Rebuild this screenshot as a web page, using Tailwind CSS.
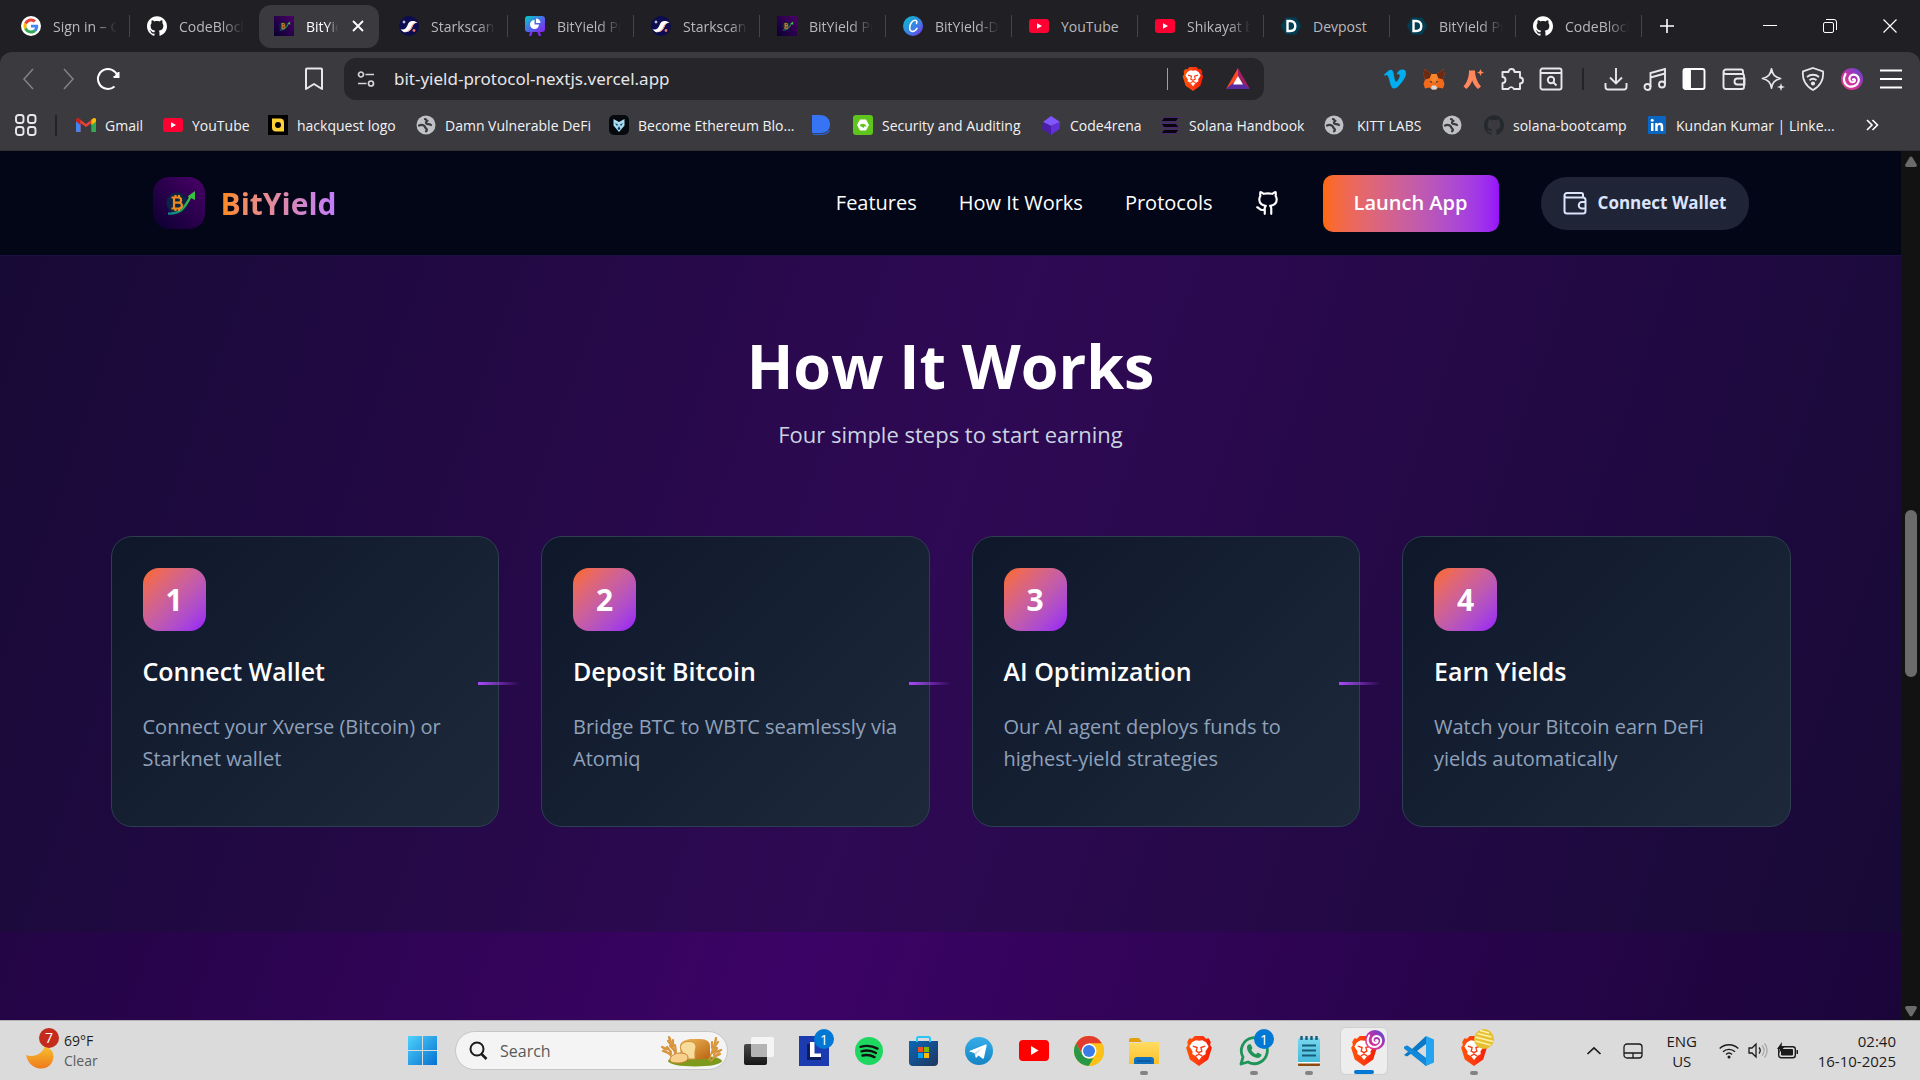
<!DOCTYPE html>
<html lang="en">
<head>
<meta charset="utf-8">
<meta name="viewport" content="width=device-width, initial-scale=1">
<title>BitYield Protocol</title>
<script src="https://cdn.jsdelivr.net/npm/@tailwindcss/browser@4"></script>
</head>
<body class="flex h-screen flex-col overflow-hidden bg-[#3b3a3f] font-['Open_Sans','Noto_Sans',sans-serif] text-white">

<!-- Shared icon symbols -->
<svg class="absolute size-0" aria-hidden="true">
  <defs>
    <linearGradient id="gLogo" x1="0" y1="1" x2="1" y2="0"><stop offset="0" stop-color="#0a0030"/><stop offset="1" stop-color="#4a0068"/></linearGradient>
    <linearGradient id="gArrow" x1="0" y1="1" x2="1" y2="0"><stop offset="0" stop-color="#10808a"/><stop offset="1" stop-color="#3fc838"/></linearGradient>
    <linearGradient id="gCanva" x1="0" y1="0" x2="1" y2="1"><stop offset="0" stop-color="#00c4cc"/><stop offset=".6" stop-color="#3f7be8"/><stop offset="1" stop-color="#7d2ae8"/></linearGradient>
    <linearGradient id="gBoard" x1="0" y1="0" x2="1" y2="1"><stop offset="0" stop-color="#00d0c0"/><stop offset=".5" stop-color="#4a6ce8"/><stop offset="1" stop-color="#8a20f0"/></linearGradient>
    <linearGradient id="gBrave" x1="0" y1="0" x2="1" y2="0"><stop offset="0" stop-color="#ff5500"/><stop offset=".5" stop-color="#ff3b12"/><stop offset="1" stop-color="#f01d00"/></linearGradient>
    <linearGradient id="gWin" x1="0" y1="0" x2="1" y2="1"><stop offset="0" stop-color="#4fd2fb"/><stop offset="1" stop-color="#0470d2"/></linearGradient>
    <linearGradient id="gSwirl" x1="1" y1="0" x2="0" y2="1"><stop offset="0" stop-color="#4a4ed8"/><stop offset=".5" stop-color="#c030a8"/><stop offset="1" stop-color="#f04080"/></linearGradient>
    <linearGradient id="gMoon" x1="0" y1="0" x2="0" y2="1"><stop offset="0" stop-color="#f8c030"/><stop offset="1" stop-color="#ee7a1c"/></linearGradient>
    <linearGradient id="gFolder" x1="0" y1="0" x2="0" y2="1"><stop offset="0" stop-color="#ffdc60"/><stop offset="1" stop-color="#fcc02c"/></linearGradient>
    <linearGradient id="gStore" x1="0" y1="0" x2="1" y2="1"><stop offset="0" stop-color="#0a68b8"/><stop offset="1" stop-color="#20355c"/></linearGradient>
    <linearGradient id="gTele" x1="0" y1="0" x2="0" y2="1"><stop offset="0" stop-color="#35aee8"/><stop offset="1" stop-color="#1583c4"/></linearGradient>
    <linearGradient id="gPad" x1="0" y1="0" x2="0" y2="1"><stop offset="0" stop-color="#76d8ee"/><stop offset="1" stop-color="#44b8d8"/></linearGradient>
    <linearGradient id="gBread" x1="0" y1="0" x2="1" y2="1"><stop offset="0" stop-color="#f2bc5c"/><stop offset="1" stop-color="#b86210"/></linearGradient>
    <linearGradient id="gDark" x1="0" y1="0" x2="0" y2="1"><stop offset="0" stop-color="#4a4a4a"/><stop offset="1" stop-color="#151515"/></linearGradient>

    <symbol id="google" viewBox="0 0 48 48"><circle cx="24" cy="24" r="24" fill="#fff"/><g transform="translate(6 6) scale(.75)"><path fill="#ea4335" d="M24 9.5c3.54 0 6.71 1.22 9.21 3.6l6.85-6.85C35.9 2.38 30.47 0 24 0 14.62 0 6.51 5.38 2.56 13.22l7.98 6.19C12.43 13.72 17.74 9.5 24 9.5z"/><path fill="#4285f4" d="M46.98 24.55c0-1.57-.15-3.09-.38-4.55H24v9.02h12.94c-.58 2.96-2.26 5.48-4.78 7.18l7.73 6c4.51-4.18 7.09-10.36 7.09-17.65z"/><path fill="#fbbc05" d="M10.53 28.59c-.48-1.45-.76-2.99-.76-4.59s.27-3.14.76-4.59l-7.98-6.19C.92 16.46 0 20.12 0 24c0 3.88.92 7.54 2.56 10.78l7.97-6.19z"/><path fill="#34a853" d="M24 48c6.48 0 11.93-2.13 15.89-5.81l-7.73-6c-2.15 1.45-4.92 2.3-8.16 2.3-6.26 0-11.57-4.22-13.47-9.91l-7.98 6.19C6.51 42.62 14.62 48 24 48z"/></g></symbol>
    <symbol id="github" viewBox="0 0 24 24"><path fill="currentColor" d="M12 .297c-6.63 0-12 5.373-12 12 0 5.303 3.438 9.8 8.205 11.385.6.113.82-.258.82-.577 0-.285-.01-1.04-.015-2.04-3.338.724-4.042-1.61-4.042-1.61C4.422 18.07 3.633 17.7 3.633 17.7c-1.087-.744.084-.729.084-.729 1.205.084 1.838 1.236 1.838 1.236 1.07 1.835 2.809 1.305 3.495.998.108-.776.417-1.305.76-1.605-2.665-.3-5.466-1.332-5.466-5.93 0-1.31.465-2.38 1.235-3.22-.135-.303-.54-1.523.105-3.176 0 0 1.005-.322 3.3 1.23.96-.267 1.98-.399 3-.405 1.02.006 2.04.138 3 .405 2.28-1.552 3.285-1.23 3.285-1.23.645 1.653.24 2.873.12 3.176.765.84 1.23 1.91 1.23 3.22 0 4.61-2.805 5.625-5.475 5.92.42.36.81 1.096.81 2.22 0 1.606-.015 2.896-.015 3.286 0 .315.21.69.825.57C20.565 22.092 24 17.592 24 12.297c0-6.627-5.373-12-12-12"/></symbol>
    <symbol id="coin" viewBox="0 0 52 52"><rect width="52" height="52" fill="url(#gLogo)"/><circle cx="24" cy="26" r="10.500" fill="#0b2547"/><path d="M15 36.500c11 1 17-5 23-18" fill="none" stroke="url(#gArrow)" stroke-width="2.400"/><path d="M34.500 19.500L42 14v9z" fill="#38c040"/><g fill="none" stroke="#f08a1c" stroke-width="2.200"><path d="M18.500 20.500h7a2.500 2.500 0 0 1 0 5.200h-4.500 5a2.900 2.900 0 0 1 0 5.800h-7.500M21 20.500v11M22.500 18v2.500M26 18v2.500M22.500 31.500V34M26 31.500V34"/></g></symbol>
    <symbol id="stark" viewBox="0 0 20 20"><circle cx="10" cy="10" r="10" fill="#0c0c4f"/><path d="M1.500 13.500c5 .5 6-2 7.500-5.500C10.500 5 13 4 18.500 6.500c-3 .3-4 1.500-5 4C12 14 9.500 17 4.500 16z" fill="#fff"/><path d="M3.500 15.800c5 .7 7.500-1.800 9-5.300 1.200-2.700 2.500-4 6-4-3 .5-4 2-5 4.500-1.500 3.500-5 6-10 4.800z" fill="#f0907a"/><circle cx="15" cy="14.500" r="1.400" fill="#ec796b"/><path d="M5 4l.6 1.400L7 6l-1.400.6L5 8l-.6-1.400L3 6l1.400-.6z" fill="#fff"/></symbol>
    <symbol id="board" viewBox="0 0 20 20"><path d="M7 14l-2 6M13 14l2 6" stroke="#7c2cf0" stroke-width="2.400"/><rect width="20" height="16" rx="3" fill="url(#gBoard)"/><path d="M9.500 4a4.500 4.500 0 1 0 4.500 4.500H9.500z" fill="#fff"/><path d="M11 2.500V7h4.500A4.500 4.500 0 0 0 11 2.500z" fill="#fff"/></symbol>
    <symbol id="canva" viewBox="0 0 20 20"><circle cx="10" cy="10" r="10" fill="url(#gCanva)"/><path d="M13.500 7.500c.8-1.400.4-3.200-1.400-3.200-3 0-5.400 4-5.400 7.200 0 2.300 1 3.900 2.800 3.900 1.800 0 3.400-1.200 4.500-3" fill="none" stroke="#fff" stroke-width="1.500" stroke-linecap="round"/></symbol>
    <symbol id="yt" viewBox="0 0 20 14"><rect width="20" height="14" rx="3" fill="#ff0033"/><path d="M8 4.200v5.600L13 7z" fill="#fff"/></symbol>
    <symbol id="devpost" viewBox="0 0 20 20"><path d="M5 1.500h10l5 8.500-5 8.500H5L0 10z" fill="#003e54"/><path d="M6.500 5v10h2.800c3 0 5-1.900 5-5s-2-5-5-5z" fill="none" stroke="#fff" stroke-width="2.400"/></symbol>
    <symbol id="globe" viewBox="0 0 20 20"><circle cx="10" cy="10" r="9.500" fill="#bfc1c5"/><path d="M3 10.500c1.500-.8 3.500-.8 5 .2 1.400 1 1 2.300 2.300 3 1 .6.700 2-.3 2.600M9 4.200c1.500 0 1 1.500 2.500 1.700-1.500.8-2.200 2-1 2.800 1.200.8 2.800-.2 4.500 1.300" fill="none" stroke="#3b3a3f" stroke-width="2.200" stroke-linecap="round" stroke-linejoin="round"/></symbol>
    <symbol id="brave" viewBox="0 0 24 28"><path d="M5.500 2.500L8 0h8l2.500 2.500L21 2.200 23 5.500l-.6 2.800L24 11l-3.400 11L12 28 3.400 22 0 11l1.600-2.700L1 5.500l2-3.300z" fill="url(#gBrave)"/><path d="M12 4.500l3-.6 3.500 2 2.500 4-3 4.500.3 2.300-3.500 2.300-2.800 3.500L9.200 19l-3.500-2.300.3-2.300L3 9.900l2.500-4 3.500-2z" fill="#fff"/><path d="M6.200 9.500l4 1.200-.8 3.500 2.600 1.300 2.600-1.300-.8-3.500 4-1.200M12 15.500v2M9 18.500l3-1.500 3 1.500" fill="none" stroke="#fa3c10" stroke-width="1.300"/></symbol>
    <symbol id="swirl" viewBox="0 0 22 22"><circle cx="11" cy="11" r="11" fill="url(#gSwirl)"/><path d="M12 11.500c1-1 2.400 0 1.900 1.300-.8 2-4.200 2-5.200-.6C7.600 9 9.800 6.500 13 6.600c3.500.1 5.500 3.400 4.600 7-1 3.800-5.600 6-10 4.600C3 16.500 1.500 11 4.500 6" fill="none" stroke="#fff" stroke-width="2.200" stroke-linecap="round"/></symbol>
  </defs>
</svg>

<!-- Tab strip -->
<header class="shrink-0">
  <div class="flex h-13 items-center bg-[#202024] pl-1 text-[14px] text-[#b9b9bd]">
    <div role="tablist" class="flex h-[43px] shrink-0 items-center">
      <button role="tab" class="flex h-full w-[126px] shrink-0 items-center gap-3 pl-[17px]"><svg class="size-5 shrink-0"><use href="#google"/></svg><span class="w-[65px] overflow-hidden text-left whitespace-nowrap [mask-image:linear-gradient(90deg,#000_65%,transparent)]">Sign in – Google</span><span class="ml-auto h-[22px] w-px shrink-0 bg-[#44444a]"></span></button>
      <button role="tab" class="flex h-full w-[126px] shrink-0 items-center gap-3 pl-[17px]"><svg class="size-5 shrink-0 text-white"><use href="#github"/></svg><span class="w-[65px] overflow-hidden text-left whitespace-nowrap [mask-image:linear-gradient(90deg,#000_65%,transparent)]">CodeBlocker</span></button>
      <div class="flex h-[43px] w-[126px] shrink-0 items-center pr-[3px] pl-[3px]">
        <div class="flex h-[43px] w-full items-center rounded-xl bg-[#3b3a3f] pl-[15px] text-white">
          <button role="tab" aria-selected="true" class="flex items-center gap-3"><svg class="size-5 shrink-0"><use href="#coin"/></svg><span class="w-8 overflow-hidden text-left whitespace-nowrap [mask-image:linear-gradient(90deg,#000_65%,transparent)]">BitYield</span></button>
          <button aria-label="Close tab" class="ml-3"><svg class="size-4" viewBox="0 0 16 16" fill="none" stroke="#fff" stroke-width="1.800"><path d="M3 3l10 10M13 3L3 13"/></svg></button>
        </div>
      </div>
      <button role="tab" class="flex h-full w-[126px] shrink-0 items-center gap-3 pl-[17px]"><svg class="size-5 shrink-0"><use href="#stark"/></svg><span class="w-[65px] overflow-hidden text-left whitespace-nowrap [mask-image:linear-gradient(90deg,#000_75%,transparent)]">Starkscan</span><span class="ml-auto h-[22px] w-px shrink-0 bg-[#44444a]"></span></button>
      <button role="tab" class="flex h-full w-[126px] shrink-0 items-center gap-3 pl-[17px]"><svg class="size-5 shrink-0"><use href="#board"/></svg><span class="w-[65px] overflow-hidden text-left whitespace-nowrap [mask-image:linear-gradient(90deg,#000_65%,transparent)]">BitYield Pitch</span><span class="ml-auto h-[22px] w-px shrink-0 bg-[#44444a]"></span></button>
      <button role="tab" class="flex h-full w-[126px] shrink-0 items-center gap-3 pl-[17px]"><svg class="size-5 shrink-0"><use href="#stark"/></svg><span class="w-[65px] overflow-hidden text-left whitespace-nowrap [mask-image:linear-gradient(90deg,#000_75%,transparent)]">Starkscan</span><span class="ml-auto h-[22px] w-px shrink-0 bg-[#44444a]"></span></button>
      <button role="tab" class="flex h-full w-[126px] shrink-0 items-center gap-3 pl-[17px]"><svg class="size-5 shrink-0"><use href="#coin"/></svg><span class="w-[65px] overflow-hidden text-left whitespace-nowrap [mask-image:linear-gradient(90deg,#000_65%,transparent)]">BitYield Protocol</span><span class="ml-auto h-[22px] w-px shrink-0 bg-[#44444a]"></span></button>
      <button role="tab" class="flex h-full w-[126px] shrink-0 items-center gap-3 pl-[17px]"><svg class="size-5 shrink-0"><use href="#canva"/></svg><span class="w-[65px] overflow-hidden text-left whitespace-nowrap [mask-image:linear-gradient(90deg,#000_65%,transparent)]">BitYield-Deck</span><span class="ml-auto h-[22px] w-px shrink-0 bg-[#44444a]"></span></button>
      <button role="tab" class="flex h-full w-[126px] shrink-0 items-center gap-3 pl-[17px]"><svg class="size-5 shrink-0"><use href="#yt"/></svg><span class="w-[65px] overflow-hidden text-left whitespace-nowrap">YouTube</span><span class="ml-auto h-[22px] w-px shrink-0 bg-[#44444a]"></span></button>
      <button role="tab" class="flex h-full w-[126px] shrink-0 items-center gap-3 pl-[17px]"><svg class="size-5 shrink-0"><use href="#yt"/></svg><span class="w-[65px] overflow-hidden text-left whitespace-nowrap [mask-image:linear-gradient(90deg,#000_65%,transparent)]">Shikayat bhi</span><span class="ml-auto h-[22px] w-px shrink-0 bg-[#44444a]"></span></button>
      <button role="tab" class="flex h-full w-[126px] shrink-0 items-center gap-3 pl-[17px]"><svg class="size-5 shrink-0"><use href="#devpost"/></svg><span class="w-[65px] overflow-hidden text-left whitespace-nowrap">Devpost</span><span class="ml-auto h-[22px] w-px shrink-0 bg-[#44444a]"></span></button>
      <button role="tab" class="flex h-full w-[126px] shrink-0 items-center gap-3 pl-[17px]"><svg class="size-5 shrink-0"><use href="#devpost"/></svg><span class="w-[65px] overflow-hidden text-left whitespace-nowrap [mask-image:linear-gradient(90deg,#000_65%,transparent)]">BitYield Protocol</span><span class="ml-auto h-[22px] w-px shrink-0 bg-[#44444a]"></span></button>
      <button role="tab" class="flex h-full w-[126px] shrink-0 items-center gap-3 pl-[17px]"><svg class="size-5 shrink-0 text-white"><use href="#github"/></svg><span class="w-[65px] overflow-hidden text-left whitespace-nowrap [mask-image:linear-gradient(90deg,#000_65%,transparent)]">CodeBlocker</span><span class="ml-auto h-[22px] w-px shrink-0 bg-[#44444a]"></span></button>
    </div>
    <button aria-label="New tab" class="ml-[17px]"><svg class="size-4" viewBox="0 0 16 16" stroke="#fff" stroke-width="1.600"><path d="M8 1v14M1 8h14"/></svg></button>
    <div class="ml-auto flex">
      <button aria-label="Minimize" class="grid w-15 place-items-center"><svg class="size-4" viewBox="0 0 16 16" stroke="#fff" fill="none"><path d="M1 7.500h14"/></svg></button>
      <button aria-label="Restore" class="grid w-15 place-items-center"><svg class="size-4" viewBox="0 0 16 16" stroke="#fff" fill="none"><rect x="1.500" y="4.500" width="10" height="10" rx="1.500"/><path d="M4 1.500h8a2.500 2.500 0 0 1 2.500 2.500v8"/></svg></button>
      <button aria-label="Close" class="grid w-15 place-items-center"><svg class="size-4" viewBox="0 0 16 16" stroke="#fff" stroke-width="1.200" fill="none"><path d="M1.500 1.500l13 13M14.500 1.500l-13 13"/></svg></button>
    </div>
  </div>

  <!-- Toolbar -->
  <div class="bg-[#202024]">
  <div class="flex h-[54px] items-center rounded-t-xl bg-[#3b3a3f] pr-[9px] pl-[9px]">
    <button aria-label="Back" class="grid w-[39px] place-items-center"><svg class="size-6" viewBox="0 0 24 24" fill="none" stroke="#838287" stroke-width="1.500"><path d="M16 2L7 12l9 10"/></svg></button>
    <button aria-label="Forward" class="grid w-[39px] place-items-center"><svg class="size-6" viewBox="0 0 24 24" fill="none" stroke="#838287" stroke-width="1.500"><path d="M8 2l9 10-9 10"/></svg></button>
    <button aria-label="Reload" class="grid w-[41px] place-items-center"><svg class="size-6" viewBox="0 0 24 24" fill="none" stroke="#fff" stroke-width="2"><path d="M18.500 19.500A10 10 0 1 1 21.500 9"/><path d="M22.500 5v5h-5" fill="#fff"/></svg></button>
    <button aria-label="Bookmark this page" class="ml-[166px] grid w-10 place-items-center"><svg class="size-6" viewBox="0 0 24 24" fill="none" stroke="#e8e8ea" stroke-width="2" stroke-linejoin="round"><path d="M5 1.500h14a1 1 0 0 1 1 1V22l-8-5-8 5V2.500a1 1 0 0 1 1-1z"/></svg></button>
    <div class="ml-[10px] flex h-[42px] w-[920px] shrink-0 items-center rounded-xl bg-[#25252a] pr-[14px] pl-[13px]">
      <svg class="size-[18px] shrink-0" viewBox="0 0 18 18" fill="none" stroke="#d5d5d8" stroke-width="1.700"><circle cx="4" cy="4.500" r="2.500"/><path d="M8.500 4.500H17M1 13.500h8.500"/><circle cx="14" cy="13.500" r="2.500"/></svg>
      <input aria-label="Address" value="bit-yield-protocol-nextjs.vercel.app" class="ml-[19px] min-w-0 flex-1 bg-transparent font-['Noto_Sans',sans-serif] text-[17px] text-[#e6e6e9] outline-none">
      <span class="h-[22px] w-px bg-[#a0a0a4]"></span>
      <svg class="ml-[14px] h-6 w-[22px]"><use href="#brave"/></svg>
      <svg class="ml-[22px] h-[22px] w-6" viewBox="0 0 24 22"><path d="M12 0v9l-4 6-8 6z" fill="#ff4724"/><path d="M12 0l12 21-8-5-4-7z" fill="#9e1f63"/><path d="M0 21l7-6h10l7 6z" fill="#5a2ba0"/><path d="M12 8l5 8.500H7z" fill="#fff"/></svg>
    </div>
    <div class="ml-auto flex">
      <button aria-label="Vimeo" class="grid w-[39px] place-items-center"><svg class="size-[22px]" viewBox="0 0 24 24"><path fill="#00adef" d="M23.976 6.417c-.105 2.338-1.739 5.543-4.894 9.609-3.268 4.247-6.026 6.370-8.290 6.370-1.409 0-2.578-1.294-3.553-3.881l-1.918-7.114c-.719-2.584-1.488-3.878-2.312-3.878-.179 0-.806.378-1.881 1.132L0 7.197a315 315 0 0 0 3.501-3.128C5.080 2.701 6.266 1.984 7.055 1.910c1.867-.18 3.016 1.100 3.447 3.838.465 2.953.789 4.789.971 5.507.539 2.450 1.131 3.674 1.776 3.674.502 0 1.256-.796 2.265-2.385 1.004-1.589 1.540-2.797 1.612-3.628.144-1.371-.395-2.061-1.614-2.061-.574 0-1.167.121-1.777.391 1.186-3.868 3.434-5.757 6.762-5.637 2.473.060 3.628 1.664 3.493 4.797z"/></svg></button>
      <button aria-label="MetaMask" class="grid w-[39px] place-items-center"><svg class="size-[22px]" viewBox="0 0 22 22"><path d="M1.500 1l7 5h5l7-5 1 5-1.500 5.500L21.500 16 20 20.500 15.500 19.500 13 21.500H9L6.500 19.500 2 20.500.5 16 2 11.500.5 6z" fill="#f26a1b"/><path d="M1.500 1l7 5-1.500 4-5 1.500L.5 6zM20.500 1l-7 5 1.500 4 5 1.500L21.500 6z" fill="#6b2a12"/><path d="M8.500 6h5l1.500 4-1.500 4h-5L7 10z" fill="#f8862c"/><path d="M9 17.500h4l1 2.500-1 1.500H9L8 20z" fill="#d6d9dc"/><path d="M6.500 13l2.700.5-.7 1.500zM15.500 13l-2.700.5.7 1.500z" fill="#233447"/></svg></button>
      <button aria-label="Ready Wallet" class="grid w-[39px] place-items-center"><svg class="size-[22px]" viewBox="0 0 22 22" fill="#ff875b"><path d="M7 2.500h6c0 6 2 11.500 6 16L16 21c-2.500-2-4.700-5-5.800-8.500-1.100 3.500-3.200 6.500-5.800 8.500L1.500 18.500C5.500 14 7 8.500 7 2.500zM18.500 1l1 2.500 2.500 1-2.500 1-1 2.500-1-2.500-2.500-1 2.500-1z"/></svg></button>
      <button aria-label="Extensions" class="grid w-[39px] place-items-center"><svg class="size-6" viewBox="0 0 24 24" fill="none" stroke="#e8e8ea" stroke-width="1.900" stroke-linejoin="round"><path d="M2.500 5h6a3 3 0 1 1 6 0h5.500v5.500a3 3 0 1 1 0 6V22h-6.200a2.800 2.800 0 0 0-5.300 0h-6v-6a3 3 0 1 0 0-6z"/></svg></button>
      <button aria-label="Search tabs" class="grid w-[39px] place-items-center"><svg class="size-6" viewBox="0 0 24 24" fill="none" stroke="#e8e8ea" stroke-width="1.900"><rect x="1.500" y="1.500" width="21" height="21" rx="2"/><path d="M1.500 6h21M14.500 15.500l3 3"/><circle cx="12" cy="13" r="3.200"/></svg></button>
      <span class="mx-3 h-[22px] w-[2px] self-center bg-[#242428]"></span>
    </div>
    <div class="flex w-[315px]">
      <button aria-label="Downloads" class="grid flex-1 place-items-center"><svg class="size-6" viewBox="0 0 24 24" fill="none" stroke="#e8e8ea" stroke-width="1.900"><path d="M12 1v15M6 10.500l6 6 6-6M1.500 16v4a2.500 2.500 0 0 0 2.500 2.500h16a2.500 2.500 0 0 0 2.500-2.500v-4"/></svg></button>
      <button aria-label="Playlist" class="grid flex-1 place-items-center"><svg class="size-6" viewBox="0 0 24 24" fill="none" stroke="#e8e8ea" stroke-width="1.900"><circle cx="4.500" cy="20" r="3"/><circle cx="19" cy="17.500" r="3"/><path d="M7.500 20V6L22 2v15.500M7.500 10.500L22 6.500"/></svg></button>
      <button aria-label="Sidebar" class="grid flex-1 place-items-center"><svg class="size-6" viewBox="0 0 24 24" fill="none" stroke="#fff" stroke-width="1.900"><rect x="1.500" y="2" width="21" height="20" rx="2"/><path d="M3 3h5v18H3z" fill="#fff"/></svg></button>
      <button aria-label="Wallet" class="grid flex-1 place-items-center"><svg class="size-6" viewBox="0 0 24 24" fill="none" stroke="#e8e8ea" stroke-width="1.900"><path d="M21 7V4.500a2 2 0 0 0-2-2H4a2.500 2.500 0 0 0-2.500 2.500v14.500A2.500 2.500 0 0 0 4 22h16a2 2 0 0 0 2-2V9a2 2 0 0 0-2-2H4A2.500 2.500 0 0 1 1.500 4.500M22.500 11.500h-7a3 3 0 0 0 0 6h7z"/></svg></button>
      <button aria-label="Leo AI" class="grid flex-1 place-items-center"><svg class="size-6" viewBox="0 0 24 24" fill="none" stroke="#e8e8ea" stroke-width="1.800" stroke-linejoin="round"><path d="M10.500 2c1 5.500 3 8 9 9.500-6 1.500-8 4-9 9.500-1-5.500-3-8-9-9.500 6-1.500 8-4 9-9.500z"/><path d="M20 16l1 3 3 1-3 1-1 3-1-3-3-1 3-1z" fill="#e8e8ea" stroke="none"/></svg></button>
      <button aria-label="VPN" class="grid flex-1 place-items-center"><svg class="size-6" viewBox="0 0 24 24" fill="none" stroke="#e8e8ea" stroke-width="1.800"><path d="M12 1l10 3.500c1 8-3 15-10 18.500C5 19.500 1 12.500 2 4.500z"/><path d="M6 10c3.500-3 8.500-3 12 0M8.500 13.200c2-1.600 5-1.600 7 0"/><circle cx="12" cy="16.500" r="1.200" fill="#e8e8ea"/></svg></button>
      <button aria-label="Profile" class="grid flex-1 place-items-center"><svg class="size-[22px]"><use href="#swirl"/></svg></button>
      <button aria-label="Menu" class="grid flex-1 place-items-center"><svg class="size-[22px]" viewBox="0 0 22 22" stroke="#fff" stroke-width="1.800"><path d="M0 2.500h22M0 11h22M0 19.500h22"/></svg></button>
    </div>
  </div>
  </div>

  <!-- Bookmarks bar -->
  <nav aria-label="Bookmarks" class="flex h-[45px] items-center border-b border-[#303034] pr-[41px] pb-[6px] pl-[15px] text-[14px] whitespace-nowrap text-[#f2f2f4]">
    <button aria-label="Apps"><svg class="size-[22px]" viewBox="0 0 22 22" fill="none" stroke="#e8e8ea" stroke-width="1.900"><rect x="1" y="1" width="7.500" height="8" rx="2.500"/><rect x="13" y="1" width="7.500" height="8" rx="2.500"/><rect x="1" y="13" width="7.500" height="8" rx="2.500"/><rect x="13" y="13" width="7.500" height="8" rx="2.500"/></svg></button>
    <span class="mr-[19px] ml-[18px] h-[21px] w-[2px] bg-[#242428]"></span>
    <a href="#" class="flex w-[87px] shrink-0 items-center gap-[9px]"><svg class="size-5" viewBox="0 0 20 20"><path d="M0 5v12h4.500V8L10 12l5.500-4v9H20V5l-2-2-8 6-8-6z" fill="#ea4335"/><path d="M0 5v10.500A1.500 1.500 0 0 0 1.500 17h3V8z" fill="#4285f4"/><path d="M20 5v10.500a1.500 1.500 0 0 1-1.500 1.500h-3V8z" fill="#34a853"/><path d="M15.500 4.500L18 3c1.500-.5 2 .8 2 2v1.500L15.500 10z" fill="#fbbc04"/><path d="M4.500 4.500L2 3C.5 2.500 0 3.800 0 5v1.500L4.500 10z" fill="#c5221f"/></svg>Gmail</a>
    <a href="#" class="flex w-[105px] shrink-0 items-center gap-[9px]"><svg class="size-5"><use href="#yt"/></svg>YouTube</a>
    <a href="#" class="flex w-[148px] shrink-0 items-center gap-[9px]"><svg class="size-5" viewBox="0 0 20 20"><path d="M0 0h20v20H0z" fill="#000"/><path d="M4 3.500h8a4 4 0 0 1 4 4V16.500H8a4 4 0 0 1-4-4z" fill="#ffd036"/><circle cx="10" cy="10" r="3" fill="#000"/></svg>hackquest logo</a>
    <a href="#" class="flex w-[193px] shrink-0 items-center gap-[9px]"><svg class="size-5"><use href="#globe"/></svg>Damn Vulnerable DeFi</a>
    <a href="#" class="flex w-[202px] shrink-0 items-center gap-[9px]"><svg class="size-5" viewBox="0 0 20 20"><rect width="20" height="20" rx="5" fill="#060a0e"/><path d="M4.500 4l5.500 3 5.500-3v6.500L10 17l-5.500-6.500z" fill="#a8dcf0"/><path d="M6 8l3 1.500L8 11zM14 8l-3 1.500 1 1.500zM10 11l1.500 3L10 15l-1.500-1z" fill="#0c3a5c"/></svg>Become Ethereum Blo...</a>
    <a href="#" aria-label="DefiLlama" class="flex w-[42px] shrink-0"><svg class="size-5" viewBox="0 0 20 20"><path d="M1 0h8c6 0 10 4 10 9.500S15 18 10 18H1z" fill="#3673f5"/><path d="M2 19.300h9c3 0 6-1 7.500-4" fill="none" stroke="#2a62dc" stroke-width="1.300"/></svg></a>
    <a href="#" class="flex w-[188px] shrink-0 items-center gap-[9px]"><svg class="size-5" viewBox="0 0 20 20"><rect width="20" height="20" rx="3" fill="#5fc51c"/><path d="M7 4.500h6l3 5.500-3 5.500H7L4 10z" fill="#fff"/><path d="M7 11c0-3 6-3 6.500 1l-2-1-.5 2z" fill="#5fc51c"/></svg>Security and Auditing</a>
    <a href="#" class="flex w-[119px] shrink-0 items-center gap-[9px]"><svg class="size-5" viewBox="0 0 20 20"><path d="M10 1l9 6-9 4-8-4z" fill="#8256ff"/><path d="M2 7l8 4v9l-9-6z" fill="#4a1ea8"/><path d="M19 7l-9 4v9l8.500-6z" fill="#6230d8"/></svg>Code4rena</a>
    <a href="#" class="flex w-[164px] shrink-0 items-center gap-[9px]"><svg class="size-5" viewBox="0 0 20 20" fill="#08040f" stroke="#5a2a90" stroke-width=".7"><path d="M4 2.500h15l-3 4H1zM1 8.500h15l3 4H4zM4 14.500h15l-3 4H1z"/></svg>Solana Handbook</a>
    <a href="#" class="flex w-[118px] shrink-0 items-center gap-[13px]"><svg class="size-5"><use href="#globe"/></svg>KITT LABS</a>
    <a href="#" aria-label="Saved site" class="flex w-[42px] shrink-0"><svg class="size-5"><use href="#globe"/></svg></a>
    <a href="#" class="flex w-[163px] shrink-0 items-center gap-[9px]"><svg class="size-5 text-[#24292e]"><use href="#github"/></svg>solana-bootcamp</a>
    <a href="#" class="flex shrink-0 items-center gap-[9px]"><svg class="size-5" viewBox="0 0 20 20"><rect x="1" y="1" width="18" height="18" rx="1" fill="#0a66c2"/><path d="M4 8h2.500v8H4zM8.200 8h2.300v1.200c.6-1 1.500-1.500 2.700-1.500 2.200 0 3 1.500 3 3.800V16h-2.500v-4c0-1.300-.4-2-1.400-2-1.100 0-1.600.8-1.600 2v4H8.200z" fill="#fff"/><circle cx="5.200" cy="5.200" r="1.500" fill="#fff"/></svg>Kundan Kumar | Linke...</a>
    <button aria-label="More bookmarks" class="ml-auto"><svg class="size-[14px]" viewBox="0 0 14 14" fill="none" stroke="#fff" stroke-width="1.600"><path d="M2 2l5 5-5 5M7.500 2l5 5-5 5"/></svg></button>
  </nav>
</header>

<!-- Web page -->
<div class="flex min-h-0 flex-1">
  <div class="flex min-w-0 flex-1 flex-col overflow-hidden bg-[linear-gradient(109deg,#1a0539,#3c0366_49%,#1a0539)]">
    <div class="border-b border-[#1e1045] bg-[#030617]">
      <div class="mx-auto flex h-[104px] w-full max-w-[1596px] items-center justify-between">
        <a href="#" class="flex items-center gap-4">
          <svg class="size-[52px] rounded-2xl"><use href="#coin"/></svg>
          <span class="bg-linear-to-r from-[#ff8904] to-[#c27aff] bg-clip-text text-[30px] font-bold text-transparent">BitYield</span>
        </a>
        <nav class="flex items-center gap-[42px] text-[20px] font-medium">
          <a href="#">Features</a>
          <a href="#">How It Works</a>
          <a href="#">Protocols</a>
          <a href="#" aria-label="GitHub"><svg class="size-[26px]" viewBox="0 0 24 24" fill="none" stroke="currentColor" stroke-width="2" stroke-linecap="round" stroke-linejoin="round"><path d="M15 22v-4a4.800 4.800 0 0 0-1-3.500c3 0 6-2 6-5.500.08-1.250-.27-2.480-1-3.500.28-1.150.28-2.350 0-3.500 0 0-1 0-3 1.500-2.640-.5-5.360-.5-8 0C6 2 5 2 5 2c-.3 1.150-.3 2.350 0 3.500A5.403 5.403 0 0 0 4 9c0 3.500 3 5.500 6 5.500-.39.490-.68 1.050-.85 1.650-.17.600-.22 1.230-.15 1.850v4M9 18c-4.510 2-5-2-7-2"/></svg></a>
          <button class="h-[57px] w-44 rounded-[10px] bg-linear-to-r from-[#ff6900] to-[#9810fa] font-semibold">Launch App</button>
          <button class="flex h-[53px] w-52 items-center justify-center gap-[11px] rounded-[26px] bg-[#1f2437] text-[17px] font-bold text-[#dbe4fb]"><svg class="size-6" viewBox="0 0 24 24" fill="none" stroke="currentColor" stroke-width="2"><path d="M20 6V3.500A1.500 1.500 0 0 0 18.500 2H4a2.500 2.500 0 0 0-2.500 2.500V20A2.500 2.500 0 0 0 4 22.500h16a2.500 2.500 0 0 0 2.500-2.500V9A2.500 2.500 0 0 0 20 6.500H4a2.200 2.200 0 0 1-2.500-2M23 11h-4a3 3 0 0 0 0 6.500h4"/></svg>Connect Wallet</button>
        </nav>
      </div>
    </div>

    <section class="bg-[#0f172b]/30 pt-[74px] pb-[105px]">
      <h2 class="text-center text-[61px] leading-[72px] font-bold">How It Works</h2>
      <p class="mt-4 text-center text-[22px] leading-8 text-[#cad5e2]">Four simple steps to start earning</p>
      <div class="mx-auto mt-[86px] grid max-w-[1680px] grid-cols-4 gap-[42px]">
        <article class="relative rounded-[21px] border border-[#2c3e4f] bg-[linear-gradient(135deg,#0f172b,#1d293b)] px-[31px] pt-[31px] pb-[51px]">
          <div class="grid size-[63px] place-items-center rounded-2xl bg-linear-to-br from-[#ff6900] to-[#9810fa] text-[30px] font-bold">1</div>
          <h3 class="mt-6 text-[25px] leading-8 font-semibold">Connect Wallet</h3>
          <p class="mt-6 text-[20px] leading-8 text-[#90a1b9]">Connect your Xverse (Bitcoin) or Starknet wallet</p>
          <span class="absolute top-1/2 -right-[22px] h-[3px] w-[42px] bg-linear-to-r from-[#ad46ff] to-transparent"></span>
        </article>
        <article class="relative rounded-[21px] border border-[#2c3e4f] bg-[linear-gradient(135deg,#0f172b,#1d293b)] px-[31px] pt-[31px] pb-[51px]">
          <div class="grid size-[63px] place-items-center rounded-2xl bg-linear-to-br from-[#ff6900] to-[#9810fa] text-[30px] font-bold">2</div>
          <h3 class="mt-6 text-[25px] leading-8 font-semibold">Deposit Bitcoin</h3>
          <p class="mt-6 text-[20px] leading-8 text-[#90a1b9]">Bridge BTC to WBTC seamlessly via Atomiq</p>
          <span class="absolute top-1/2 -right-[22px] h-[3px] w-[42px] bg-linear-to-r from-[#ad46ff] to-transparent"></span>
        </article>
        <article class="relative rounded-[21px] border border-[#2c3e4f] bg-[linear-gradient(135deg,#0f172b,#1d293b)] px-[31px] pt-[31px] pb-[51px]">
          <div class="grid size-[63px] place-items-center rounded-2xl bg-linear-to-br from-[#ff6900] to-[#9810fa] text-[30px] font-bold">3</div>
          <h3 class="mt-6 text-[25px] leading-8 font-semibold">AI Optimization</h3>
          <p class="mt-6 text-[20px] leading-8 text-[#90a1b9]">Our AI agent deploys funds to highest-yield strategies</p>
          <span class="absolute top-1/2 -right-[22px] h-[3px] w-[42px] bg-linear-to-r from-[#ad46ff] to-transparent"></span>
        </article>
        <article class="relative rounded-[21px] border border-[#2c3e4f] bg-[linear-gradient(135deg,#0f172b,#1d293b)] px-[31px] pt-[31px] pb-[51px]">
          <div class="grid size-[63px] place-items-center rounded-2xl bg-linear-to-br from-[#ff6900] to-[#9810fa] text-[30px] font-bold">4</div>
          <h3 class="mt-6 text-[25px] leading-8 font-semibold">Earn Yields</h3>
          <p class="mt-6 text-[20px] leading-8 text-[#90a1b9]">Watch your Bitcoin earn DeFi yields automatically</p>
        </article>
      </div>
    </section>
  </div>
  <!-- Scrollbar -->
  <div class="flex w-[19px] shrink-0 flex-col items-center bg-[#121212] pt-[5px] pb-[3px]">
    <svg class="h-[11px] w-3" viewBox="0 0 12 11" fill="#6b6b6b"><path d="M4.500 1.500q1.500-2 3 0L12 9q0 2-2 2H2Q0 11 0 9z"/></svg>
    <div class="mt-[343px] h-[167px] w-3 rounded-full bg-[#6b6b6b]"></div>
    <svg class="mt-auto h-[11px] w-3" viewBox="0 0 12 11" fill="#6b6b6b"><path d="M4.500 9.500q1.500 2 3 0L12 2q0-2-2-2H2Q0 0 0 2z"/></svg>
  </div>
</div>

<!-- Taskbar -->
<footer class="flex h-15 shrink-0 items-center border-t border-[#b4b2b6] bg-[#dbdbdb] pr-6 text-[#1b1b1b]">
  <button class="flex w-[395px] shrink-0 items-center gap-[5px] pl-[25px] text-left text-[14px] leading-5">
    <span class="relative"><svg class="h-10 w-[34px]" viewBox="0 0 34 40"><path d="M1 24c9 3 17-2 19-9 8 3 11 10 6 18-6 8-22 6-25-9z" fill="url(#gMoon)"/></svg><span class="absolute -top-[3px] left-[14px] grid size-5 place-items-center rounded-full bg-[#c42b1c] text-[14px] text-white">7</span></span>
    <span><span class="block">69°F</span><span class="block text-[#5c5c5c]">Clear</span></span>
  </button>
  <button aria-label="Start" class="grid w-[55px] place-items-center"><svg class="size-[29px]" viewBox="0 0 29 29" fill="url(#gWin)"><path d="M0 0h14v14H0zM15 0h14v14H15zM0 15h14v14H0zM15 15h14v14H15z"/></svg></button>
  <label class="mr-[3px] ml-[5px] flex h-[39px] w-[273px] shrink-0 items-center rounded-full border border-[#c6c6c6] bg-[#f4f4f4] pr-1 pl-[13px]">
    <svg class="size-[19px] shrink-0" viewBox="0 0 19 19" fill="none" stroke="#1b1b1b" stroke-width="2"><circle cx="8" cy="8" r="6.500"/><path d="M12.500 13l5 5" stroke-width="2.500"/></svg>
    <input type="search" aria-label="Search" placeholder="Search" class="ml-3 w-40 min-w-0 flex-1 bg-transparent text-[16px] outline-none placeholder:text-[#5a5a5a]">
    <svg class="h-8 w-[62px] shrink-0" viewBox="0 0 62 32"><ellipse cx="34" cy="26" rx="27" ry="5.500" fill="#7e9a1c"/><g fill="none" stroke="#d8953c" stroke-linecap="round"><path d="M16 25L9 3M15 26L2 13M48 25L55 4M50 26l9-10" stroke-width="1.500"/><path d="M8 2l1 4M7 6l4 5M12 5l0 6M9 11l5 5M14 10l1 7M1 12l5 2M2 16l8 3M6 12l4 5M55 3l-1 5M57 7l-4 6M51 7l0 6M55 13l-4 5M60 15l-5 2M59 19l-6 3M56 13l-3 7" stroke-width="2.200"/></g><path d="M19 11c0-5 7-7 12-7h8c7 0 10 3 10 7v9c0 3-2 4-5 4l-24 1z" fill="url(#gBread)"/><path d="M20 10c3-5 14-5 15 1 0 3-1 4-1 6v7H21v-8c-2-2-2-4-1-6z" fill="#f8dc9c" stroke="#d08c38"/><path d="M9 25c0-5 6-7 10-7 6 0 8 2 8 5s-5 5-10 5-8-1-8-3z" fill="#f6d08c" stroke="#c8802c"/></svg>
  </label>
  <div class="flex h-full items-center">
    <button aria-label="Task view" class="grid h-full w-[55px] shrink-0 place-items-center"><svg class="size-[30px]" viewBox="0 0 30 30"><rect y="8" width="23" height="21" rx="2" fill="url(#gDark)"/><rect x="7" y="1" width="23" height="20" rx="2" fill="#f6f6f6" opacity=".93"/><path d="M7 8h16v13H9a2 2 0 0 1-2-2z" fill="#b4b4b4"/></svg></button>
    <button aria-label="Lightshot, 1 notification" class="relative grid h-full w-[55px] shrink-0 place-items-center"><svg class="size-[30px]" viewBox="0 0 30 30"><path d="M0 0h30v30H0z" fill="#1c3bb0"/><path d="M8 8v16h14v-4H12V8z" fill="#0b1c60"/><path d="M11 6v15h11v-3.500h-6.500V6z" fill="#fff"/></svg><span class="absolute top-[8px] left-[28px] grid size-5 place-items-center rounded-full bg-[#0078d4] text-[14px] text-white">1</span></button>
    <button aria-label="Spotify" class="grid h-full w-[55px] shrink-0 place-items-center"><svg class="size-7" viewBox="0 0 28 28"><circle cx="14" cy="14" r="14" fill="#1ed760"/><path d="M5.500 9.800c6-1.600 12-1 17 1.800M6.500 14.300c5-1.400 10-.8 14.500 1.700M7.500 18.500c4-1 8-.6 12 1.600" fill="none" stroke="#111" stroke-width="2.400" stroke-linecap="round"/></svg></button>
    <button aria-label="Microsoft Store" class="grid h-full w-[55px] shrink-0 place-items-center"><svg class="h-[30px] w-[29px]" viewBox="0 0 29 30"><path d="M0 5h29v21a4 4 0 0 1-4 4H4a4 4 0 0 1-4-4z" fill="url(#gStore)"/><path d="M8 6V2.500A1.500 1.500 0 0 1 9.500 1h10A1.500 1.500 0 0 1 21 2.500V6" fill="none" stroke="#2cc4f4" stroke-width="2"/><path d="M9 11h5v5H9z" fill="#f25022"/><path d="M15 11h5v5h-5z" fill="#7fba00"/><path d="M9 17h5v5H9z" fill="#00a4ef"/><path d="M15 17h5v5h-5z" fill="#ffb900"/></svg></button>
    <button aria-label="Telegram" class="grid h-full w-[55px] shrink-0 place-items-center"><svg class="size-7" viewBox="0 0 28 28"><circle cx="14" cy="14" r="14" fill="url(#gTele)"/><path d="M5 13.800L20.500 7.600c.8-.3 1.300.2 1.100 1.200l-2.600 12c-.2.900-.8 1.100-1.500.7l-4-3-2 2c-.5.400-.9.200-1-.6L9.500 16 5 14.800c-.7-.3-.7-.7 0-1z" fill="#fff"/><path d="M9.500 16l8-5.500-6 6-.5 3z" fill="#b8d8ec"/></svg></button>
    <button aria-label="YouTube" class="grid h-full w-[55px] shrink-0 place-items-center"><svg class="h-[21px] w-[30px]" viewBox="0 0 30 21"><rect width="30" height="21" rx="4" fill="#f00"/><path d="M12 6v9l7.500-4.500z" fill="#fff"/></svg></button>
    <button aria-label="Chrome" class="grid h-full w-[55px] shrink-0 place-items-center"><svg class="size-[30px]" viewBox="0 0 30 30"><circle cx="15" cy="15" r="15" fill="#fbc116"/><path d="M2 7.500A15 15 0 0 1 28 7.500H15L8.500 18.800z" fill="#e33b2e"/><path d="M2 7.500L8.500 18.800C10 21 12 22.500 15 22.500h6L14.500 30A15 15 0 0 1 2 7.500z" fill="#279847"/><path d="M21.500 18.800L14.700 30A15 15 0 0 0 28 7.500H15z" fill="#fbc116"/><circle cx="15" cy="15" r="7.500" fill="#fff"/><circle cx="15" cy="15" r="6" fill="#3b7de8"/></svg></button>
    <button aria-label="File Explorer" class="relative grid h-full w-[55px] shrink-0 place-items-center"><svg class="size-[30px]" viewBox="0 0 30 30"><path d="M0 4a2 2 0 0 1 2-2h8l3 4H0z" fill="#e0a010"/><path d="M0 7h11l3-1h16v22H0z" fill="url(#gFolder)"/><path d="M5 28v-4a3 3 0 0 1 3-3h14a3 3 0 0 1 3 3v4z" fill="#0f70c0"/><path d="M8 25h14" stroke="#0a4c90" stroke-width="1.200"/></svg><span class="absolute bottom-[5px] h-[4px] w-2 rounded-full bg-[#838383]"></span></button>
    <button aria-label="Brave" class="grid h-full w-[55px] shrink-0 place-items-center"><svg class="h-[30px] w-[26px]"><use href="#brave"/></svg></button>
    <button aria-label="WhatsApp, 1 notification" class="relative grid h-full w-[55px] shrink-0 place-items-center"><svg class="size-[30px]" viewBox="0 0 30 30"><path d="M2 28l2-7A13 13 0 1 1 9 26z" fill="none" stroke="#1f9458" stroke-width="2.800" stroke-linejoin="round"/><path d="M9.500 8.500l2-.5 2 4-1.200 2c1 2 2.500 3.300 4.700 4.200l1.700-1.700 3.800 2c0 2-1.800 3.500-4 3.500C13 21.500 8 16 8 11.500c0-1.200.6-2.400 1.500-3z" fill="#1f9458"/></svg><span class="absolute top-[8px] left-[28px] grid size-5 place-items-center rounded-full bg-[#0078d4] text-[14px] text-white">1</span><span class="absolute bottom-[5px] h-[4px] w-2 rounded-full bg-[#838383]"></span></button>
    <button aria-label="Notepad" class="relative grid h-full w-[55px] shrink-0 place-items-center"><svg class="h-[30px] w-[22px]" viewBox="0 0 22 30"><rect y="2" width="22" height="26" rx="2" fill="url(#gPad)"/><path d="M0 27h22v2a1 1 0 0 1-1 1H1a1 1 0 0 1-1-1z" fill="#8c4a10"/><path d="M0 26h22v1.500H0z" fill="#fff"/><path d="M3.500 0v4M8.500 0v4M13.500 0v4M18.500 0v4" stroke="#1c5a78" stroke-width="2.400"/><path d="M4 9.500h14M4 14.500h14M4 19.500h14" stroke="#145c78" stroke-width="1.800"/></svg><span class="absolute bottom-[5px] h-[4px] w-2 rounded-full bg-[#838383]"></span></button>
    <button aria-label="Brave, active window" class="relative grid h-full w-[55px] shrink-0 place-items-center"><span class="relative grid size-12 place-items-center rounded-md border border-[#d0d0d0] bg-[#ededed]"><svg class="h-[30px] w-[26px]"><use href="#brave"/></svg><svg class="absolute top-[2px] left-6 size-5"><use href="#swirl"/></svg><span class="absolute bottom-0 h-[4px] w-5 rounded-full bg-[#0078d4]"></span></span></button>
    <button aria-label="Visual Studio Code" class="grid h-full w-[55px] shrink-0 place-items-center"><svg class="size-[30px]" viewBox="0 0 30 30"><path d="M22 0L8 13 3 9.500 0 11l5 4-5 4 3 1.500L8 17l14 13V22l-9-7 9-7z" fill="#0a78c4"/><path d="M3 9.500L0 11v1.500L22 30v-8z" fill="#1488d8"/><path d="M22 0l8 3.500v23L22 30z" fill="#24a4f0"/></svg></button>
    <button aria-label="Brave, second profile" class="relative grid h-full w-[55px] shrink-0 place-items-center"><svg class="h-[30px] w-[26px]"><use href="#brave"/></svg><svg class="absolute top-[8px] left-[28px] size-5" viewBox="0 0 20 20"><circle cx="10" cy="10" r="10" fill="#e6c033"/><path d="M3.500 4.500l14 3.500M1 8l18 4.500M1.500 12l15 4M6 1.500l9 2.500" stroke="#fff2a8" stroke-width="1.300"/></svg><span class="absolute bottom-[5px] h-[4px] w-2 rounded-full bg-[#838383]"></span></button>
  </div>
  <div class="ml-auto flex items-center text-[15px] leading-5">
    <button aria-label="Show hidden icons"><svg class="h-[14px] w-4" viewBox="0 0 16 14" fill="none" stroke="#1b1b1b" stroke-width="1.700"><path d="M1.500 10L8 4l6.500 6"/></svg></button>
    <button aria-label="Touchpad" class="ml-[21px]"><svg class="h-4 w-5" viewBox="0 0 20 16" fill="none" stroke="#1b1b1b" stroke-width="1.300"><rect x="1" y="1" width="18" height="14" rx="3"/><path d="M1 10h18M10 10v5"/></svg></button>
    <button class="ml-[22px] w-[34px] text-center">ENG US</button>
    <button aria-label="Network, volume and battery" class="ml-5 flex items-center gap-[9px]">
      <svg class="h-[17px] w-5" viewBox="0 0 20 17" fill="none" stroke="#1b1b1b" stroke-width="1.400"><path d="M.7 6.500c5-5 13.600-5 18.600 0M4 9.800c3.300-3.300 8.700-3.300 12 0M7 12.500c1.700-1.600 4.300-1.600 6 0"/><circle cx="10" cy="15" r="1.500" fill="#1b1b1b" stroke="none"/></svg>
      <svg class="h-[17px] w-5" viewBox="0 0 20 17" fill="none" stroke="#1b1b1b" stroke-width="1.300"><path d="M1 6h3l4-4v13l-4-4H1zM11 5.500c1.500 1.800 1.500 4.200 0 6"/><path d="M14 3.500c2.600 3 2.600 7 0 10M16.500 1.500c3.500 4 3.500 10 0 14" stroke="#a8a8a8"/></svg>
      <svg class="h-[17px] w-[22px]" viewBox="0 0 22 17"><rect x="1.700" y="4.700" width="16.600" height="11" rx="2.500" fill="none" stroke="#1b1b1b" stroke-width="1.400"/><rect x="4" y="7" width="12" height="6.500" rx="1" fill="#1b1b1b"/><path d="M19.500 8h1.500v4h-1.500z" fill="#1b1b1b"/><path d="M5 0L0 7h3l-1 4 5.500-6h-3z" fill="#1b1b1b"/></svg>
    </button>
    <button class="ml-[19px] text-right">02:40<br>16-10-2025</button>
  </div>
</footer>
</body>
</html>
